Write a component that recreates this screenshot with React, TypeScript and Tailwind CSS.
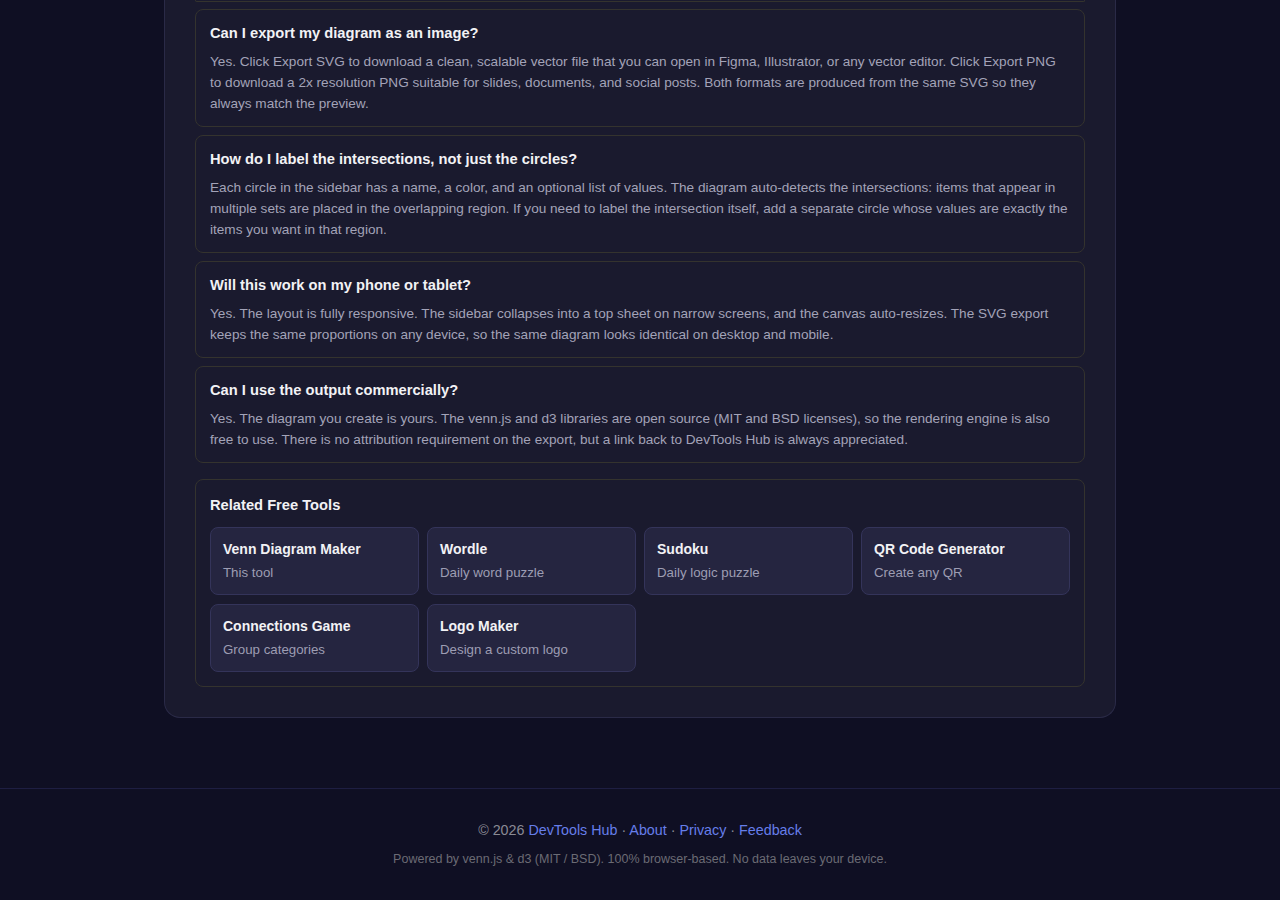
import React from "react";

interface FaqItem {
  q: string;
  a: string;
}

interface ToolLink {
  name: string;
  desc: string;
}

const faqs: FaqItem[] = [
  {
    q: "Can I export my diagram as an image?",
    a: "Yes. Click Export SVG to download a clean, scalable vector file that you can open in Figma, Illustrator, or any vector editor. Click Export PNG to download a 2x resolution PNG suitable for slides, documents, and social posts. Both formats are produced from the same SVG so they always match the preview.",
  },
  {
    q: "How do I label the intersections, not just the circles?",
    a: "Each circle in the sidebar has a name, a color, and an optional list of values. The diagram auto-detects the intersections: items that appear in multiple sets are placed in the overlapping region. If you need to label the intersection itself, add a separate circle whose values are exactly the items you want in that region.",
  },
  {
    q: "Will this work on my phone or tablet?",
    a: "Yes. The layout is fully responsive. The sidebar collapses into a top sheet on narrow screens, and the canvas auto-resizes. The SVG export keeps the same proportions on any device, so the same diagram looks identical on desktop and mobile.",
  },
  {
    q: "Can I use the output commercially?",
    a: "Yes. The diagram you create is yours. The venn.js and d3 libraries are open source (MIT and BSD licenses), so the rendering engine is also free to use. There is no attribution requirement on the export, but a link back to DevTools Hub is always appreciated.",
  },
];

const tools: ToolLink[] = [
  { name: "Venn Diagram Maker", desc: "This tool" },
  { name: "Wordle", desc: "Daily word puzzle" },
  { name: "Sudoku", desc: "Daily logic puzzle" },
  { name: "QR Code Generator", desc: "Create any QR" },
  { name: "Connections Game", desc: "Group categories" },
  { name: "Logo Maker", desc: "Design a custom logo" },
];

function FaqCard({ item }: { item: FaqItem }) {
  return (
    <div className="rounded-[8px] border border-[#34332e] bg-[#1a1a2e] px-[14px] pt-[14px] pb-[12px]">
      <h3 className="text-[14.7px] leading-[18px] font-bold text-[#f2f2f5]">{item.q}</h3>
      <p className="mt-[9px] text-[13.6px] leading-[21px] text-[#a3a3b8]">{item.a}</p>
    </div>
  );
}

export default function App() {
  return (
    <div
      className="min-h-screen bg-[#0f0f23] flex flex-col"
      style={{ fontFamily: '"Liberation Sans", Arial, sans-serif' }}
    >
      <main className="w-[952px] mx-auto">
        <section className="rounded-b-[16px] border-x border-b border-[#2a2a47] bg-[#1a1a2e] px-[30px] pb-[30px]">
          {/* tail of the previous FAQ entry */}
          <div className="h-[2px] rounded-b-[6px] border-x border-b border-[#34332e]" />

          <div className="mt-[7px] flex flex-col gap-[8px]">
            {faqs.map((f) => (
              <FaqCard key={f.q} item={f} />
            ))}
          </div>

          <div className="mt-[16px] rounded-[8px] border border-[#34332e] bg-[#1a1a2e] p-[14px]">
            <h2 className="text-[14.7px] leading-[22px] font-bold text-[#f2f2f5]">Related Free Tools</h2>
            <div className="mt-[11px] grid grid-cols-4 gap-x-[8px] gap-y-[9px]">
              {tools.map((t) => (
                <a
                  key={t.name}
                  href="#"
                  className="block h-[68px] rounded-[8px] border border-[#34345a] bg-[#252540] px-[12px] pt-[12px]"
                >
                  <div className="text-[14px] leading-[18px] font-bold text-[#f2f2f5]">{t.name}</div>
                  <div className="mt-[7px] text-[13.3px] leading-[16px] text-[#9d9db3]">{t.desc}</div>
                </a>
              ))}
            </div>
          </div>
        </section>
      </main>

      <footer className="mt-[70px] border-t border-[#1e1e42] pt-[31px] pb-[31px] text-center">
        <p className="text-[14.3px] leading-[20px] text-[#8a8a94]">
          © 2026 <a href="#" className="text-[#667eea]">DevTools Hub</a> ·{" "}
          <a href="#" className="text-[#667eea]">About</a> ·{" "}
          <a href="#" className="text-[#667eea]">Privacy</a> ·{" "}
          <a href="#" className="text-[#667eea]">Feedback</a>
        </p>
        <p className="mt-[11px] text-[12.5px] leading-[16px] text-[#6b6b74]">
          Powered by venn.js &amp; d3 (MIT / BSD). 100% browser-based. No data leaves your device.
        </p>
      </footer>
    </div>
  );
}
